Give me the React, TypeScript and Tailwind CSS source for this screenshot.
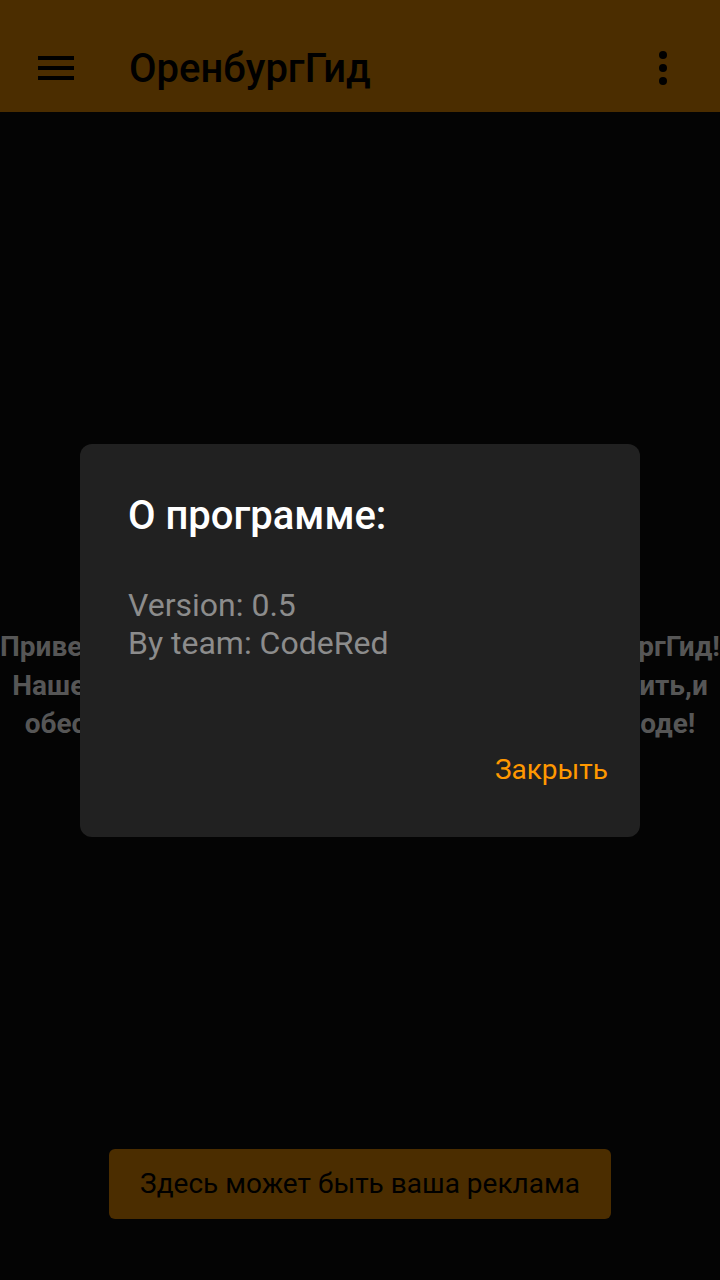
import React from 'react';

const font = { fontFamily: 'Roboto, "Noto Sans", sans-serif' };

const MenuIcon = () => (
    <svg width="36" height="28" viewBox="0 0 36 28" className="block">
        <rect x="0" y="2" width="36" height="4" fill="#000" />
        <rect x="0" y="12" width="36" height="4" fill="#000" />
        <rect x="0" y="22" width="36" height="4" fill="#000" />
    </svg>
);

const MoreIcon = () => (
    <svg width="10" height="34" viewBox="0 0 10 34" className="block">
        <circle cx="5" cy="4" r="4" fill="#000" />
        <circle cx="5" cy="17" r="4" fill="#000" />
        <circle cx="5" cy="30" r="4" fill="#000" />
    </svg>
);

const welcomeLines = [
    'Приветствуем вас в нашем приложении ОренбургГид!',
    'Наше приложение поможет вам изучить,посетить,и',
    'обеспечит вам интересный досуг в нашем городе!',
];

const App: React.FC = () => {
    return (
        <div className="relative w-[720px] h-[1280px] overflow-hidden bg-[#040404] flex flex-col" style={font}>
            {/* Toolbar (dimmed) */}
            <div className="h-[112px] bg-[#4b2d00] flex items-center pt-[24px] pl-[38px] pr-[52px] shrink-0">
                <MenuIcon />
                <div className="ml-[55px] text-[40px] font-medium text-black leading-none flex-1 pt-[2px]">ОренбургГид</div>
                <MoreIcon />
            </div>

            {/* Welcome text */}
            <div className="pt-[516px] text-center text-[28px] font-bold leading-[38.5px] text-[#565656]">
                {welcomeLines.map((line) => (
                    <div key={line} className="whitespace-nowrap">{line}</div>
                ))}
            </div>

            <div className="flex-1" />

            {/* Ad banner */}
            <div className="flex justify-center pb-[61px]">
                <div className="w-[502px] h-[70px] rounded-[6px] bg-[#4b2d00] flex items-center justify-center text-[28px] text-black">
                    Здесь может быть ваша реклама
                </div>
            </div>

            {/* About dialog */}
            <div className="absolute inset-0 flex items-center justify-center">
                <div className="w-[560px] h-[393px] rounded-[12px] bg-[#212121] flex flex-col pl-[48px] pr-[32px] pt-[48px] pb-[50px]">
                    <div className="text-[40px] font-medium text-white leading-[47px]">О программе:</div>
                    <div className="mt-[47px] text-[32px] text-[#8c8c8c] leading-[38px]">
                        <div>Version: 0.5</div>
                        <div>By team: CodeRed</div>
                    </div>
                    <div className="flex-1" />
                    <div className="flex justify-end">
                        <span className="text-[28px] text-[#ff9800] leading-[34px]">Закрыть</span>
                    </div>
                </div>
            </div>
        </div>
    );
};

export default App;
